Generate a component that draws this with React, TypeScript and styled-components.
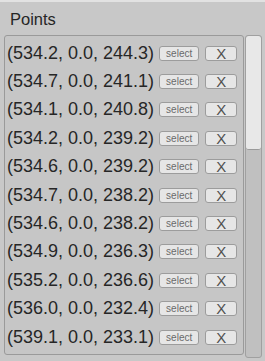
import * as React from 'react';
import styled, { createGlobalStyle } from 'styled-components';

const GlobalStyle = createGlobalStyle`
	html, body {
		margin: 0;
		padding: 0;
		background: #c8c8c8;
	}
	body {
		font-family: 'Liberation Sans', Arial, sans-serif;
	}
`;

const Panel = styled.div`
	width: 265px;
	height: 361px;
	box-sizing: border-box;
	background: #c8c8c8;
	border-top: 2px solid #e2e2e2;
	display: flex;
	flex-direction: column;
	overflow: hidden;
`;

const Header = styled.div`
	height: 33px;
	display: flex;
	align-items: center;
	padding-left: 10px;
	padding-top: 2px;
	box-sizing: border-box;
	font-size: 16.5px;
	color: #262626;
`;

const Body = styled.div`
	display: flex;
	align-items: flex-start;
	padding-left: 4px;
	gap: 1px;
`;

const ListBox = styled.div`
	width: 240px;
	height: 320px;
	box-sizing: border-box;
	border: 1px solid #9a9a9a;
	border-radius: 3px;
	background: #c6c6c6;
	padding-top: 3px;
	overflow: hidden;
`;

const Row = styled.div`
	height: 28.4px;
	display: flex;
	align-items: center;
	padding-left: 2px;
`;

const Coord = styled.span`
	width: 154px;
	font-size: 18px;
	color: #262626;
	white-space: nowrap;
`;

const SmallButton = styled.div<{ $w: number; $h: number; $size: number; $color: string }>`
	width: ${(p) => p.$w}px;
	height: ${(p) => p.$h}px;
	box-sizing: border-box;
	border: 1px solid #9c9c9c;
	border-radius: 3px;
	background: #e6e6e6;
	display: flex;
	align-items: center;
	justify-content: center;
	font-size: ${(p) => p.$size}px;
	color: ${(p) => p.$color};
	margin-right: 6px;
`;

const ScrollTrack = styled.div`
	width: 17px;
	height: 323px;
	box-sizing: border-box;
	border: 1px solid #a0a0a0;
	border-radius: 3px;
	background: #c0c0c0;
	overflow: hidden;
`;

const ScrollThumb = styled.div`
	height: 114px;
	box-sizing: border-box;
	border-bottom: 1px solid #9a9a9a;
	border-radius: 3px;
	background: #e8e8e8;
`;

const points = [
	'(534.2, 0.0, 244.3)',
	'(534.7, 0.0, 241.1)',
	'(534.1, 0.0, 240.8)',
	'(534.2, 0.0, 239.2)',
	'(534.6, 0.0, 239.2)',
	'(534.7, 0.0, 238.2)',
	'(534.6, 0.0, 238.2)',
	'(534.9, 0.0, 236.3)',
	'(535.2, 0.0, 236.6)',
	'(536.0, 0.0, 232.4)',
	'(539.1, 0.0, 233.1)',
];

const App: React.FC = () => {
	return (
		<>
			<GlobalStyle />
			<Panel>
				<Header>Points</Header>
				<Body>
					<ListBox>
						{points.map((p, i) => (
							<Row key={i}>
								<Coord>{p}</Coord>
								<SmallButton $w={41} $h={15} $size={10} $color="#6a6a6a">
									select
								</SmallButton>
								<SmallButton $w={32} $h={15} $size={15} $color="#505050">
									X
								</SmallButton>
							</Row>
						))}
					</ListBox>
					<ScrollTrack>
						<ScrollThumb />
					</ScrollTrack>
				</Body>
			</Panel>
		</>
	);
};

export default App;
